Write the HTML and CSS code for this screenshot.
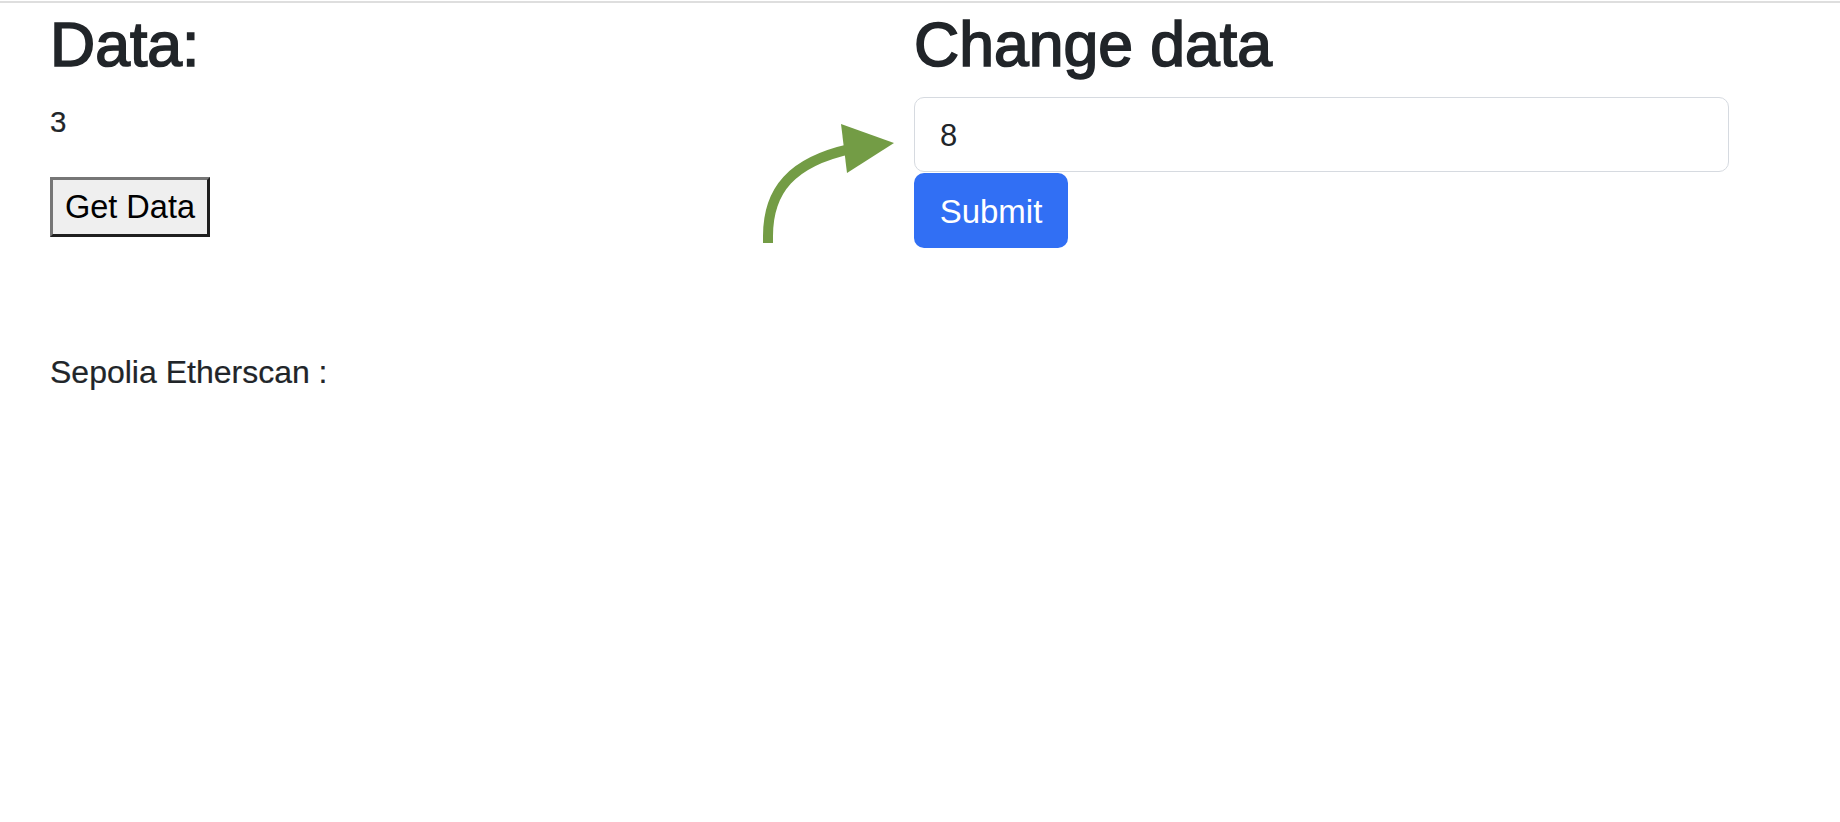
FILE: index.html
```html
<!DOCTYPE html>
<html lang="en">
<head>
<meta charset="utf-8">
<title>Data</title>
<link rel="stylesheet" href="styles.css">
</head>
<body>
<div class="topline"></div>
<main class="page">
  <section class="col col-left">
    <h1 class="title">Data:</h1>
    <p class="value">3</p>
    <button class="get-btn" type="button">Get Data</button>
    <p class="scan">Sepolia Etherscan :</p>
  </section>
  <section class="col col-right">
    <h1 class="title">Change data</h1>
    <form class="change-form">
      <input class="data-input" type="text" value="8">
      <button class="submit-btn" type="button">Submit</button>
    </form>
  </section>
  <svg class="arrow" viewBox="0 0 1000 260" width="1000" height="260" aria-hidden="true">
    <path d="M768 243 V236 C768 190 792 162 850 149" fill="none" stroke="#739c45" stroke-width="10"/>
    <polygon points="841,124 894,143 847,173" fill="#739c45"/>
  </svg>
</main>
</body>
</html>
```

FILE: styles.css
```css
html, body {
  margin: 0;
  padding: 0;
  background: #fff;
}

body {
  font-family: "Liberation Sans", Arial, sans-serif;
  color: #212529;
}

.topline {
  height: 2px;
  margin-top: 1px;
  background: #dedede;
}

.page {
  position: relative;
  display: grid;
  grid-template-columns: 864px 815px;
  padding: 4px 0 0 50px;
}

.col {
  display: flex;
  flex-direction: column;
  align-items: flex-start;
}

.title {
  margin: 0;
  font-size: 62.5px;
  line-height: 1.2;
  font-weight: 500;
  -webkit-text-stroke: 1.7px #212529;
  color: #212529;
}

.value {
  margin: 18px 0 0;
  font-size: 29.5px;
  line-height: 1.5;
  -webkit-text-stroke: 0.2px #212529;
}

.get-btn {
  margin-top: 32.6px;
  width: 160px;
  height: 60px;
  padding: 1px 0 0;
  box-sizing: border-box;
  font-family: "Liberation Sans", Arial, sans-serif;
  font-size: 32.5px;
  color: #000;
  background: #efefef;
  border: 3px solid;
  border-color: #767676 #1f1f1f #1f1f1f #767676;
}

.scan {
  margin: 111px 0 0;
  font-size: 32px;
  line-height: 1.5;
  -webkit-text-stroke: 0.2px #212529;
}

.change-form {
  margin: 14.6px 0 0;
  display: flex;
  flex-direction: column;
  align-items: flex-start;
  width: 815px;
}

.data-input {
  width: 815px;
  height: 75px;
  box-sizing: border-box;
  margin: 0;
  padding: 4px 25px 0;
  border: 1px solid #d6dae0;
  border-radius: 10px;
  font-family: "Liberation Sans", Arial, sans-serif;
  font-size: 31px;
  color: #212529;
  background: #fff;
  outline: none;
}

.submit-btn {
  margin-top: 1px;
  width: 154px;
  height: 75px;
  padding: 4px 0 0;
  border: none;
  border-radius: 10px;
  background: #316ff4;
  color: #fff;
  font-family: "Liberation Sans", Arial, sans-serif;
  font-size: 33px;
}

.arrow {
  position: absolute;
  left: 0;
  top: -3px;
  pointer-events: none;
}
```
